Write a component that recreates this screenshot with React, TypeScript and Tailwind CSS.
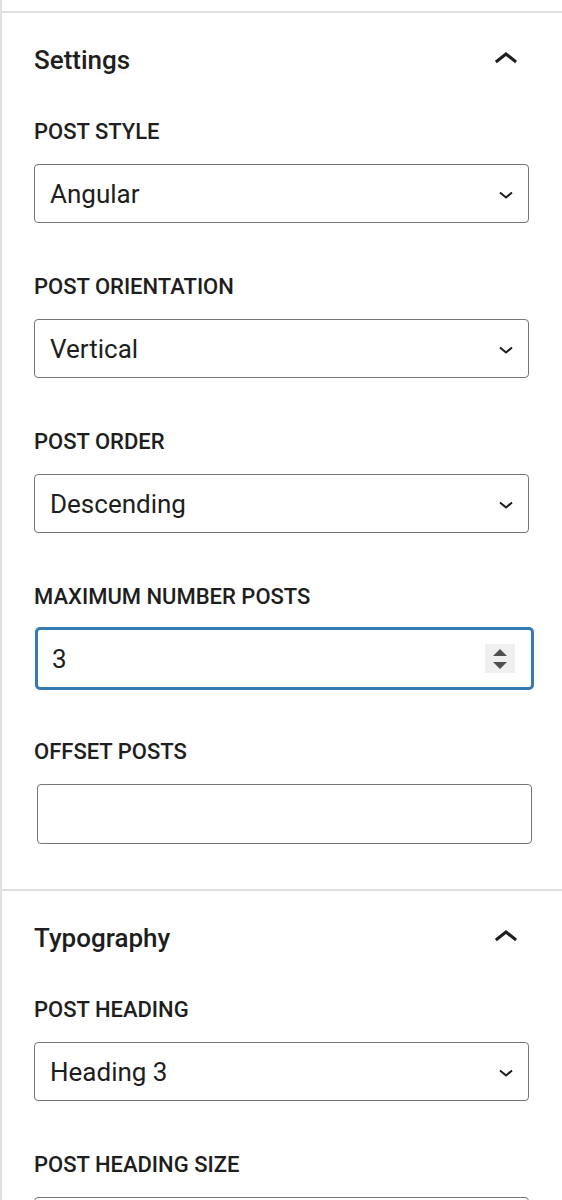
import React from "react";

const font = "font-['Roboto','Liberation_Sans',sans-serif]";

function ChevronUp() {
    return (
        <svg width="48" height="48" viewBox="0 0 24 24" className="shrink-0">
            <path d="M6.5 12.4L12 8l5.5 4.4-.9 1.2L12 10l-4.6 3.6-1-1.2z" fill="#1e1e1e" />
        </svg>
    );
}

function ChevronDown() {
    return (
        <svg width="26" height="26" viewBox="0 0 26 26" className="shrink-0">
            <polyline points="7,11.5 13,16.5 19,11.5" fill="none" stroke="#1e1e1e" strokeWidth="2" />
        </svg>
    );
}

function Label({ children }: { children: React.ReactNode }) {
    return (
        <div className="text-[22px] leading-[24px] font-medium uppercase text-[#1e1e1e] mb-[20px]">
            {children}
        </div>
    );
}

function SelectBox({ value }: { value: string }) {
    return (
        <div className="flex items-center justify-between h-[59px] border border-[#757575] rounded-[4px] pl-[15px] pr-[9px] bg-white">
            <span className="text-[26px] leading-[30px] text-[#1e1e1e]">{value}</span>
            <ChevronDown />
        </div>
    );
}

function PanelTitle({ title }: { title: string }) {
    return (
        <div className="flex items-center justify-between h-[48px] -mr-[1px]">
            <h2 className="text-[26px] leading-[32px] font-medium text-[#1e1e1e]">{title}</h2>
            <ChevronUp />
        </div>
    );
}

export default function App() {
    return (
        <div className={`${font} bg-white min-h-[1200px] border-l-2 border-[#e0e0e0] overflow-hidden`}>
            {/* tail of previous panel */}
            <div className="h-[11px]" />

            {/* Settings */}
            <section className="border-t-2 border-[#e0e0e0] pl-[32px] pr-[33px] pt-[23px] pb-[45px]">
                <PanelTitle title="Settings" />
                <div className="mt-[36px]">
                    <Label>Post style</Label>
                    <SelectBox value="Angular" />
                </div>
                <div className="mt-[52px]">
                    <Label>Post orientation</Label>
                    <SelectBox value="Vertical" />
                </div>
                <div className="mt-[52px]">
                    <Label>Post order</Label>
                    <SelectBox value="Descending" />
                </div>
                <div className="mt-[52px]">
                    <Label>Maximum number posts</Label>
                    <div className="-mt-[2px] ml-[1px] w-[499px] h-[63px] flex items-center justify-between border-[3px] border-[#3579b5] rounded-[5px] pl-[14px] pr-[16px]">
                        <span className="text-[26px] leading-[30px] text-[#1e1e1e]">3</span>
                        <div className="w-[30px] h-[29px] bg-[#efefef] flex flex-col items-center justify-center gap-[6px]">
                            <svg width="14" height="7" viewBox="0 0 14 7">
                                <path d="M7 0L14 7H0z" fill="#505050" />
                            </svg>
                            <svg width="14" height="7" viewBox="0 0 14 7">
                                <path d="M0 0H14L7 7z" fill="#505050" />
                            </svg>
                        </div>
                    </div>
                </div>
                <div className="mt-[50px]">
                    <Label>Offset posts</Label>
                    <div className="ml-[3px] w-[495px] h-[60px] border border-[#757575] rounded-[4px] bg-white" />
                </div>
            </section>

            {/* Typography */}
            <section className="border-t-2 border-[#e0e0e0] pl-[32px] pr-[33px] pt-[23px]">
                <PanelTitle title="Typography" />
                <div className="mt-[36px]">
                    <Label>Post heading</Label>
                    <SelectBox value="Heading 3" />
                </div>
                <div className="mt-[52px]">
                    <Label>Post heading size</Label>
                    <SelectBox value="" />
                </div>
            </section>
        </div>
    );
}
